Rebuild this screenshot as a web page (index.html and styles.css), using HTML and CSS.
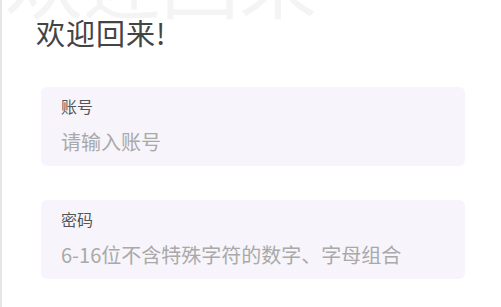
FILE: index.html
```html
<!DOCTYPE html>
<html lang="zh-CN">
<head>
    <meta charset="UTF-8">
    <meta name="viewport" content="width=device-width, initial-scale=1.0">
    <title>登录</title>
    <link rel="stylesheet" href="styles.css">
</head>
<body>
    <div class="page">
        <div class="watermark">欢迎回来</div>
        <h2 class="title">欢迎回来!</h2>
        <div class="field">
            <label class="field-label">账号</label>
            <input class="field-input" type="text" placeholder="请输入账号">
        </div>
        <div class="field">
            <label class="field-label">密码</label>
            <input class="field-input" type="password" placeholder="6-16位不含特殊字符的数字、字母组合">
        </div>
    </div>
</body>
</html>
```

FILE: styles.css
```css
html, body {
    margin: 0;
    padding: 0;
    background: #fff;
}
body {
    font-family: "Noto Sans CJK SC", "Noto Sans", sans-serif;
    overflow: hidden;
}
.page {
    position: relative;
    height: 307px;
    border-left: 2px solid #e6e6e6;
    padding: 0 36px 0 39px;
    box-sizing: border-box;
}
.watermark {
    position: absolute;
    left: 3px;
    top: -60px;
    font-size: 78px;
    line-height: 1;
    color: #f4f4f4;
    white-space: nowrap;
}
.title {
    position: relative;
    margin: 0 0 0 -5px;
    padding-top: 14px;
    height: 87px;
    box-sizing: border-box;
    font-size: 29px;
    line-height: 36px;
    font-weight: normal;
    letter-spacing: 1px;
    color: #444;
}
.field {
    display: flex;
    flex-direction: column;
    background: #f7f5fb;
    border-radius: 6px;
    padding: 7px 20px 0;
    height: 79px;
    box-sizing: border-box;
    margin-bottom: 34px;
}
.field-label {
    font-size: 16px;
    line-height: 24px;
    color: #555;
}
.field-input {
    margin-top: 10px;
    padding: 0;
    border: none;
    outline: none;
    background: transparent;
    font-family: inherit;
    font-size: 20px;
    line-height: 28px;
    color: #333;
}
.field-input::placeholder {
    color: #a9a9a9;
}
```
